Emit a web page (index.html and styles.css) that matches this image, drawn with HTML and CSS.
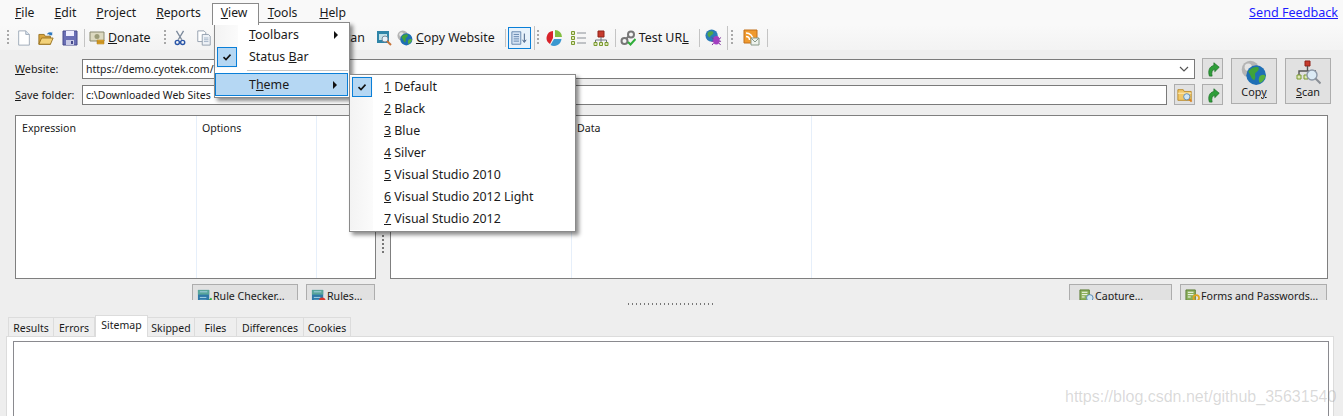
FILE: index.html
```html
<!DOCTYPE html>
<html lang="en">

<head>
    <meta charset="UTF-8">
    <meta name="viewport" content="width=device-width, initial-scale=1.0">
    <title>WebCopy</title>
    <link rel="stylesheet" href="styles.css">
</head>

<body>
    <svg class="defs" width="0" height="0">
        <defs>
            <symbol id="check" viewBox="0 0 10 10">
                <path d="M1.5 5.2 4 7.6 8.5 2.6" fill="none" stroke="#111" stroke-width="1.6" />
            </symbol>
            <symbol id="globe" viewBox="0 0 18 18">
                <circle cx="6.5" cy="6.5" r="6" fill="#b4b4b4" />
                <circle cx="5" cy="5" r="2.5" fill="#e4e4e4" />
                <circle cx="10.5" cy="10.5" r="6.8" fill="#1f6fb5" />
                <path d="M5 8c2-3 5-3.500 7-3 1 2-1 3-2 4s1 3-1 5c-2-1-2-3-4-6Z" fill="#3fa33a" />
                <path d="M13 11c2-1 3-1 4 0-.5 2-2 4-4 5-1-2-1-3 0-5Z" fill="#57b23e" />
            </symbol>
            <symbol id="arrow" viewBox="0 0 16 18">
                <path d="M4 17C2 11 4 6 9 5V2l6 5-5 5V9c-3 1-4 4-3 8Z" fill="#2f9e3a" stroke="#1b6e25" stroke-width=".8" />
            </symbol>
            <symbol id="sheet" viewBox="0 0 16 16">
                <path d="M1 1h10v11H1Z" fill="#8bb05a" stroke="#5c7d36" />
                <path d="M3 3.500h6M3 6h6M3 8.500h3" stroke="#fff" />
            </symbol>
            <symbol id="blue" viewBox="0 0 16 16">
                <path d="M1 1h12v14H1Z" fill="#2f79a8" />
                <path d="M1 1h12v5H1Z" fill="#58a59a" />
                <path d="M3 3h8M3 9h7M3 12h7" stroke="#a9d4e6" />
            </symbol>
        </defs>
    </svg>

    <div class="app">
        <nav class="menubar">
            <span class="menu-item"><u>F</u>ile</span>
            <span class="menu-item"><u>E</u>dit</span>
            <span class="menu-item"><u>P</u>roject</span>
            <span class="menu-item"><u>R</u>eports</span>
            <span class="menu-item active"><u>V</u>iew</span>
            <span class="menu-item m-tools"><u>T</u>ools</span>
            <span class="menu-item"><u>H</u>elp</span>
            <a class="feedback" href="#">Send Feedback</a>
        </nav>

        <div class="toolbar">
            <span class="grip"></span>
            <svg class="ic i-new" viewBox="0 0 16 18"><path d="M2 1h8l4 4v12H2Z" fill="#fff" stroke="#9aa6b5" /><path d="M10 1v4h4" fill="#dde6f2" stroke="#9aa6b5" /></svg>
            <svg class="ic i-open" viewBox="0 0 18 18"><path d="M1 5h6l1 2h6v9H1Z" fill="#d9a63f" stroke="#96701f" /><path d="M4 9h13l-3 7H1Z" fill="#f3d27a" stroke="#96701f" /><path d="M10 5c1-2 3-3 5-2l1-1v4h-4l1-1c-1-.5-2 0-3 0Z" fill="#2f79c0" /></svg>
            <svg class="ic i-save" viewBox="0 0 16 16"><path d="M1 1h14v14H1Z" fill="#6a6fb5" stroke="#474b8c" /><path d="M4 1h8v5H4Z" fill="#eef" /><path d="M4 10h8v5H4Z" fill="#c9cbe6" /><path d="M9 11h2v3H9Z" fill="#474b8c" /></svg>
            <span class="sep s-1"></span>
            <span class="tb-text t-donate">
                <svg class="ic" viewBox="0 0 16 16"><path d="M1 2h14v9H1Z" fill="#dcd9c0" stroke="#8a8a70" /><circle cx="8" cy="6.500" r="2.500" fill="#9c9c78" /><path d="M8 10h7v2H8Zm0 2h7v2H8Z" fill="#e3a92f" stroke="#a87a18" stroke-width=".5" /></svg>
                <span><u>D</u>onate</span>
            </span>
            <span class="grip g-2"></span>
            <svg class="ic i-cut" viewBox="0 0 12 18"><path d="M2 1l6 10M10 1 4 11" stroke="#7c8a9c" stroke-width="1.500" /><circle cx="3" cy="14" r="2.300" fill="none" stroke="#2a56a8" stroke-width="1.600" /><circle cx="9" cy="14" r="2.300" fill="none" stroke="#2a56a8" stroke-width="1.600" /></svg>
            <svg class="ic i-copy" viewBox="0 0 16 18"><path d="M1 1h7l2 2v10H1Z" fill="#fff" stroke="#8d99a8" /><path d="M6 5h7l2 2v10H6Z" fill="#eef2f7" stroke="#8d99a8" /><path d="M8 9h5M8 11h5M8 13h5" stroke="#9fb0c4" /></svg>
            <span class="tb-text t-scan">Scan</span>
            <svg class="ic i-find" viewBox="0 0 16 16"><path d="M1 1h12v12H1Z" fill="#2f85a8" /><path d="M3 4h8v6H3Z" fill="#bfe0e8" /><circle cx="9" cy="9" r="3" fill="#e8f2f8" stroke="#7a8a9c" /><path d="m11 11 4 4" stroke="#c8743a" stroke-width="2" /></svg>
            <svg class="ic i-globe"><use href="#globe" /></svg>
            <span class="tb-text t-copy"><span><u>C</u>opy Website</span></span>
            <span class="sep s-2"></span>
            <span class="toggle">
                <svg class="ic" viewBox="0 0 18 16"><path d="M1 1h10v14H1Z" fill="#d6e4f5" stroke="#5b7ea8" /><path d="M3 4h6M3 6.500h6M3 9h6M3 11.500h6" stroke="#5b7ea8" /><path d="M15 3v9M13 10l2 3 2-3" fill="none" stroke="#34507a" /></svg>
            </span>
            <span class="sep s-3"></span>
            <span class="grip g-3"></span>
            <svg class="ic i-pie" viewBox="0 0 16 16"><path d="M7 1a7 7 0 0 0-3 13l3-6Z" fill="#d8232a" /><path d="M9 0a7 7 0 0 1 7 7H9Z" fill="#82bd3f" /><path d="M15.500 9A7.500 7.500 0 0 1 4.500 15L8 9Z" fill="#3b98d0" /></svg>
            <svg class="ic i-list" viewBox="0 0 16 16"><path d="M1.500 1.500h3v3h-3Zm0 5h3v3h-3Zm0 5h3v3h-3Z" fill="#dfe8b8" stroke="#7a9a30" /><path d="M7 3h9M7 8h9M7 13h9" stroke="#8a8f96" /></svg>
            <svg class="ic i-tree" viewBox="0 0 16 16"><path d="M5 1h6v6H5Z" fill="#c63a2c" stroke="#8f2318" /><path d="M8 7v3M2.500 13v-3h11v3M8 10v3" fill="none" stroke="#6f7780" /><path d="M1 12.500h3v3H1Zm5.500 0h3v3h-3Zm5.500 0h3v3h-3Z" fill="#dfe8b8" stroke="#7a9a30" /></svg>
            <span class="sep s-4"></span>
            <span class="tb-text t-test">
                <svg class="ic" viewBox="0 0 16 16"><g fill="none" stroke="#777" stroke-width="2"><circle cx="4.500" cy="11" r="3" /><circle cx="11" cy="4.500" r="3" /><path d="m6 9 3-3" /></g><path d="m8 12 2.500 2.500L15.500 9" fill="none" stroke="#2fae3a" stroke-width="2" /></svg>
                <span>Test UR<u>L</u></span>
            </span>
            <span class="sep s-5"></span>
            <svg class="ic i-bug" viewBox="0 0 18 18"><circle cx="7" cy="7" r="6.500" fill="#2b7cb8" /><path d="M3 4c2-2 5-2 6 0-1 3-3 2-4 5-2-1-3-3-2-5Z" fill="#4fa64a" /><ellipse cx="12" cy="12" rx="3.500" ry="4.500" fill="#a23fc0" /><path d="M7 9l2 1.500M7 13h2M7.500 17 9 15M17 9l-2 1.500M17 13h-2M16.500 17 15 15" stroke="#7a2a98" /></svg>
            <span class="sep s-6"></span>
            <span class="grip g-4"></span>
            <svg class="ic i-rss" viewBox="0 0 17 17"><path d="M1 1h13v13H1Z" fill="#f09a2e" stroke="#c2701a" /><path d="M3 4c4 0 7 3 7 7M3 7.500c2 0 3.500 1.500 3.500 3.500" fill="none" stroke="#fff" stroke-width="1.500" /><path d="M8 9h8v7H8Z" fill="#eef3ee" stroke="#8a9a8a" /><path d="m8 9 4 4 4-4" fill="none" stroke="#8a9a8a" /></svg>
            <span class="sep s-7"></span>
        </div>

        <form class="form">
            <div class="form-rows">
                <div class="form-row">
                    <label class="field-label"><u>W</u>ebsite:</label>
                    <div class="input combo">
                        <span>https://demo.cyotek.com/</span>
                        <svg class="chevron" viewBox="0 0 10 6"><path d="m1 1 4 4 4-4" fill="none" stroke="#555" stroke-width="1.200" /></svg>
                    </div>
                    <span class="small-btn"><svg class="ic"><use href="#arrow" /></svg></span>
                </div>
                <div class="form-row">
                    <label class="field-label"><u>S</u>ave folder:</label>
                    <div class="input"><span>c:\Downloaded Web Sites</span></div>
                    <span class="small-btn">
                        <svg class="ic" viewBox="0 0 18 18"><path d="M1 3h6l1 2h8v10H1Z" fill="#f1c868" stroke="#b98a26" /><path d="M1 7h15" stroke="#fff2c8" /><circle cx="11" cy="11" r="3.500" fill="#cfe6f6" stroke="#5a88b0" /><path d="m13.500 13.500 3 3" stroke="#d9821f" stroke-width="2" /></svg>
                    </span>
                    <span class="small-btn"><svg class="ic"><use href="#arrow" /></svg></span>
                </div>
            </div>
            <div class="big-btn">
                <svg class="ic big-ic"><use href="#globe" /></svg>
                <span>Cop<u>y</u></span>
            </div>
            <div class="big-btn">
                <svg class="ic big-ic" viewBox="0 0 26 26"><path d="M10 1h5v5h-5Z" fill="#c63a2c" stroke="#8f2318" /><path d="M12.500 6v5M4 15v-4h17" fill="none" stroke="#555" stroke-width="1.400" /><path d="M2 15h4v4H2Zm7 0h4v4H9Z" fill="#dfe8b8" stroke="#7a9a30" /><circle cx="17" cy="15" r="5" fill="#dcebf5" stroke="#8d99a8" stroke-width="1.400" /><path d="m20.500 18.500 5 5" stroke="#8a8f96" stroke-width="2" /></svg>
                <span><u>S</u>can</span>
            </div>
        </form>

        <section class="panels">
            <div class="panel panel-left">
                <div class="col col-expr">Expression</div>
                <div class="col col-opts">Options</div>
            </div>
            <div class="splitter-v">
                <span class="vdots"></span>
            </div>
            <div class="panel panel-right">
                <div class="col col-hidden"></div>
                <div class="col col-data">Data</div>
            </div>
        </section>

        <div class="actions">
            <div class="action-group group-left">
                <span class="action a-rule">
                    <svg class="ic" viewBox="0 0 16 16"><use href="#blue" /><path d="m8 13 2.500 2.500L15.500 10" fill="none" stroke="#2fae3a" stroke-width="2" /></svg>
                    Rule Checker…
                </span>
                <span class="action a-rules">
                    <svg class="ic" viewBox="0 0 16 16"><use href="#blue" /><circle cx="12" cy="12.500" r="3.500" fill="#d8382c" /><path d="M10 12.500h4" stroke="#fff" stroke-width="1.500" /></svg>
                    Rules…
                </span>
            </div>
            <div class="action-group group-right">
                <span class="action a-capture">
                    <svg class="ic" viewBox="0 0 16 16"><use href="#sheet" /><circle cx="11.500" cy="9.500" r="3.500" fill="#cfe6f6" stroke="#5a88b0" /></svg>
                    Capture…
                </span>
                <span class="action a-forms">
                    <svg class="ic" viewBox="0 0 16 16"><use href="#sheet" /><circle cx="12" cy="9.500" r="3" fill="none" stroke="#e0a51f" stroke-width="1.800" /><path d="m10 12-3 3" stroke="#e0a51f" stroke-width="1.800" /></svg>
                    Forms and Passwords…
                </span>
            </div>
        </div>

        <div class="splitter-h"><span class="hdots"></span></div>

        <div class="tabs">
            <span class="tab t1">Results</span>
            <span class="tab t2">Errors</span>
            <span class="tab t3 selected">Sitemap</span>
            <span class="tab t4">Skipped</span>
            <span class="tab t5">Files</span>
            <span class="tab t6">Differences</span>
            <span class="tab t7">Cookies</span>
        </div>
        <div class="tab-page">
            <div class="tab-inner"></div>
        </div>

        <!-- open menus sit over the page -->
        <div class="dropdown view-menu">
            <div class="drop-item"><span class="gutter"></span><span class="drop-label"><u>T</u>oolbars</span><span class="caret"></span></div>
            <div class="drop-item"><span class="gutter"><span class="checkbox"><svg><use href="#check" /></svg></span></span><span class="drop-label">Status <u>B</u>ar</span></div>
            <div class="drop-sep"></div>
            <div class="drop-item hot"><span class="gutter"></span><span class="drop-label">T<u>h</u>eme</span><span class="caret"></span></div>
        </div>
        <div class="dropdown theme-menu">
            <div class="drop-item"><span class="gutter"><span class="checkbox"><svg><use href="#check" /></svg></span></span><span class="drop-label"><u>1</u> Default</span></div>
            <div class="drop-item"><span class="gutter"></span><span class="drop-label"><u>2</u> Black</span></div>
            <div class="drop-item"><span class="gutter"></span><span class="drop-label"><u>3</u> Blue</span></div>
            <div class="drop-item"><span class="gutter"></span><span class="drop-label"><u>4</u> Silver</span></div>
            <div class="drop-item"><span class="gutter"></span><span class="drop-label"><u>5</u> Visual Studio 2010</span></div>
            <div class="drop-item"><span class="gutter"></span><span class="drop-label"><u>6</u> Visual Studio 2012 Light</span></div>
            <div class="drop-item"><span class="gutter"></span><span class="drop-label"><u>7</u> Visual Studio 2012</span></div>
        </div>

        <div class="watermark">https://blog.csdn.net/github_35631540</div>
    </div>
</body>

</html>
```

FILE: styles.css
```css
* {
    box-sizing: border-box;
}

body {
    margin: 0;
    font-family: "Noto Sans", "Open Sans", sans-serif;
    font-size: 12px;
    color: #1a1a1a;
}

.defs {
    position: absolute;
}

.app {
    position: relative;
    width: 1343px;
    height: 416px;
    overflow: hidden;
    background: #eeeeee;
}

.ic {
    display: block;
    flex: none;
    width: 16px;
    height: 16px;
}

/* menu bar */
.menubar {
    display: flex;
    align-items: center;
    height: 25px;
    padding-left: 15px;
    background: #f9f9f9;
    font-size: 12.2px;
}

.menu-item {
    margin-right: 20px;
    white-space: nowrap;
}

.m-tools {
    margin-right: 22px;
}

.menu-item.active {
    width: 47px;
    height: 22px;
    margin: 3px 9px 0 -9px;
    padding: 0 8px;
    background: #fff;
    border: 1px solid #8a8a8a;
    border-bottom: 0;
    position: relative;
    z-index: 5;
}

.feedback {
    margin-left: auto;
    margin-right: 5px;
    color: #1c1cff;
    font-size: 12.6px;
}

/* toolbar */
.toolbar {
    display: flex;
    align-items: center;
    height: 25px;
    padding-left: 7px;
    background: linear-gradient(#f9f9f9, #f3f3f3);
    font-size: 12.4px;
}

.tb-text {
    display: flex;
    align-items: center;
    gap: 3px;
    white-space: nowrap;
}

.grip {
    width: 2px;
    height: 16px;
    flex: none;
    background: repeating-linear-gradient(#a8a8a8 0 2px, transparent 2px 4px);
}

.sep {
    width: 1px;
    height: 18px;
    flex: none;
    margin-left: 7px;
    background: #c4c4c4;
}

.i-new { margin-left: 7px; }
.i-open { margin-left: 6px; }
.i-save { margin-left: 8px; }
.s-1 { margin-left: 6px; }
.t-donate { margin-left: 4px; }
.g-2 { margin-left: 13px; }
.i-cut { margin-left: 8px; width: 12px; }
.i-copy { margin-left: 10px; }
.t-scan { margin-left: 126px; }
.i-find { margin-left: 11px; }
.i-globe { margin-left: 5px; }
.t-copy { margin-left: 3px; }
.s-2 { margin-left: 10px; }

.toggle {
    display: flex;
    align-items: center;
    justify-content: center;
    flex: none;
    width: 23px;
    height: 22px;
    margin-left: 2px;
    background: #e8f2fb;
    border: 1px solid #0a7fd8;
}

.s-3 { margin-left: 3px; height: 24px; }
.g-3 { margin-left: 2px; }
.i-pie { margin-left: 7px; }
.i-list { margin-left: 8px; }
.i-tree { margin-left: 7px; }
.s-4 { margin-left: 6px; }
.t-test { margin-left: 4px; }
.s-5 { margin-left: 10px; }
.i-bug { margin-left: 5px; width: 17px; height: 17px; }
.s-6 { margin-left: 5px; height: 24px; }
.g-4 { margin-left: 3px; }
.i-rss { margin-left: 10px; width: 17px; height: 17px; }

/* website + save folder */
.form {
    display: flex;
    gap: 8px;
    padding: 8px 12px 0 15px;
    height: 65px;
}

.form-rows {
    flex: 1;
    display: flex;
    flex-direction: column;
    gap: 5px;
}

.form-row {
    display: flex;
    align-items: center;
    gap: 7px;
    height: 21px;
}

.field-label {
    width: 60px;
    flex: none;
    font-size: 10.8px;
    white-space: nowrap;
}

.input {
    flex: 1;
    display: flex;
    align-items: center;
    justify-content: space-between;
    height: 20px;
    padding: 0 3px;
    background: #fff;
    border: 1px solid #7a7a7a;
    font-size: 10.5px;
}

.chevron {
    width: 10px;
    height: 6px;
    margin-right: 2px;
}

.small-btn {
    display: flex;
    align-items: center;
    justify-content: center;
    flex: none;
    width: 21px;
    height: 21px;
    background: #e1e1e1;
    border: 1px solid #adadad;
}

.big-btn {
    display: flex;
    flex-direction: column;
    align-items: center;
    flex: none;
    width: 46px;
    height: 46px;
    padding-top: 1px;
    background: #e1e1e1;
    border: 1px solid #adadad;
    font-size: 10.8px;
}

.big-btn span {
    margin-top: -2px;
}

.big-ic {
    width: 26px;
    height: 26px;
}

/* list panels */
.panels {
    display: flex;
    height: 164px;
    padding: 0 15px;
}

.panel {
    display: flex;
    background: #fff;
    border: 1px solid #7f7f7f;
    font-size: 10.6px;
}

.panel-left {
    width: 361px;
}

.panel-right {
    flex: 1;
}

.col {
    padding: 5px 6px;
    border-right: 1px solid #e6effa;
}

.col-expr { width: 181px; }
.col-opts { width: 120px; padding-left: 5px; }
.col-hidden { width: 181px; }
.col-data { width: 240px; padding-left: 5px; }

.splitter-v {
    display: flex;
    align-items: flex-end;
    justify-content: center;
    width: 14px;
    padding-bottom: 24px;
}

.vdots {
    width: 2px;
    height: 20px;
    background: repeating-linear-gradient(#777 0 2px, transparent 2px 4px);
}

/* buttons under the panels, cut off by the splitter */
.actions {
    display: flex;
    justify-content: space-between;
    height: 16px;
    margin-top: 5px;
    padding: 0 16px 0 192px;
    overflow: hidden;
}

.action-group {
    display: flex;
    gap: 8px;
}

.action {
    display: flex;
    align-items: flex-start;
    gap: 1px;
    height: 24px;
    padding: 4px 0 0 4px;
    background: #e1e1e1;
    border: 1px solid #adadad;
    font-size: 10.6px;
    white-space: nowrap;
}

.action .ic {
    width: 15px;
    height: 15px;
}

.a-rule { width: 106px; }
.a-rules { width: 69px; }
.a-capture { width: 103px; padding-left: 9px; }
.a-forms { width: 147px; padding-left: 4px; }

.splitter-h {
    display: flex;
    justify-content: center;
    height: 16px;
    padding-top: 3px;
}

.hdots {
    width: 88px;
    height: 2px;
    margin-left: 1px;
    background: repeating-linear-gradient(90deg, #777 0 1.500px, transparent 1.500px 4px);
}

/* tabs */
.tabs {
    display: flex;
    align-items: flex-end;
    height: 20px;
    padding-left: 8px;
    font-size: 10.5px;
}

.tab {
    display: flex;
    align-items: center;
    justify-content: center;
    height: 19px;
    padding-top: 1px;
    background: #eeeeee;
    border: 1px solid #dcdcdc;
    border-bottom: 0;
    border-left: 0;
}

.tab.t1 { border-left: 1px solid #dcdcdc; }
.tab.selected {
    height: 22px;
    margin-bottom: -1px;
    padding: 0 0 3px;
    background: #fff;
    border-left: 1px solid #dcdcdc;
    position: relative;
    z-index: 1;
}

.t1 { width: 46px; }
.t2 { width: 41px; }
.t3 { width: 53px; }
.t4 { width: 47px; }
.t5 { width: 42px; }
.t6 { width: 67px; }
.t7 { width: 47px; }

.tab-page {
    height: 90px;
    margin: 0 9px 0 6px;
    padding: 4px 4px 0 6px;
    background: #fff;
    border: 1px solid #dcdcdc;
}

.tab-inner {
    height: 120px;
    border: 1px solid #8a8a8f;
}

/* dropdowns */
.dropdown {
    position: absolute;
    z-index: 4;
    background: #fff;
    border: 1px solid #8a8a8a;
    box-shadow: 3px 3px 4px rgba(0, 0, 0, 0.45);
    font-size: 12.4px;
}

.view-menu {
    left: 214px;
    top: 22px;
    width: 136px;
    height: 76px;
    padding: 1px 1px 1px 0;
}

.theme-menu {
    left: 349px;
    top: 74px;
    width: 227px;
    height: 158px;
    padding: 1px 1px 1px 0;
}

.drop-item {
    display: flex;
    align-items: center;
    height: 22px;
    white-space: nowrap;
    position: relative;
}

.drop-label {
    margin: -2px 0 0 11px;
}

.gutter {
    display: flex;
    align-items: center;
    justify-content: center;
    flex: none;
    width: 23px;
    height: 100%;
    background: linear-gradient(90deg, #f3f3f3, #fbfbfb);
}

.checkbox {
    display: flex;
    align-items: center;
    justify-content: center;
    width: 20px;
    height: 20px;
    background: #b5d7f3;
    border: 1px solid #0a7fd8;
}

.checkbox svg {
    width: 10px;
    height: 10px;
}

.caret {
    position: absolute;
    right: 10px;
    top: 7px;
    border-left: 4px solid #111;
    border-top: 4px solid transparent;
    border-bottom: 4px solid transparent;
}

.drop-sep {
    height: 5px;
    margin-left: 32px;
    background: linear-gradient(#fff 2px, #c8c8c8 2px 3px, #fff 3px);
}

.drop-item.hot {
    height: 23px;
    background: #b5d7f3;
    border: 1px solid #0a7fd8;
}

.drop-item.hot .gutter {
    background: none;
    width: 22px;
}

.drop-item.hot .drop-label {
    margin-top: 0;
}

.watermark {
    position: absolute;
    left: 1065px;
    top: 388px;
    font-family: "Liberation Sans", Arial, sans-serif;
    font-size: 16px;
    color: rgba(120, 120, 120, 0.28);
    white-space: nowrap;
}
```
